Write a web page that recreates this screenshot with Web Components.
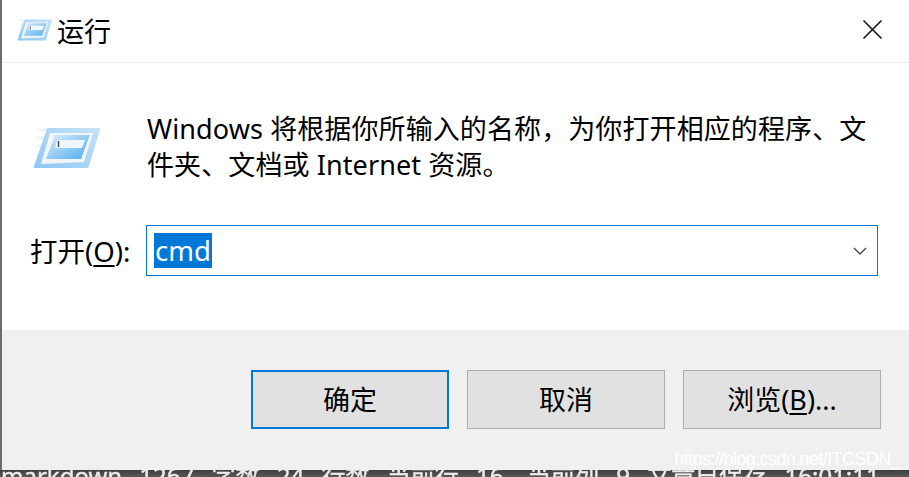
<!DOCTYPE html>
<html lang="zh">
<head>
<meta charset="utf-8">
<title>运行</title>
<style>
  html, body { margin: 0; height: 100%; overflow: hidden; }
  body { font-family: "Noto Sans", "Noto Sans CJK SC", sans-serif; color: #000; }
</style>
</head>
<body>
<template id="runIconTpl">
  <style>
    :host { display: block; line-height: 0; }
    svg { display: block; width: 100%; height: 100%; }
  </style>
  <svg viewBox="0 0 67 42" preserveAspectRatio="none">
    <defs>
      <linearGradient id="edge" x1="0" y1="1" x2="1" y2="0">
        <stop offset="0" stop-color="#8fc8f4"/>
        <stop offset="1" stop-color="#c6e2f8"/>
      </linearGradient>
      <linearGradient id="pane" x1="0" y1="0" x2="1" y2="1">
        <stop offset="0" stop-color="#dcedfb"/>
        <stop offset="1" stop-color="#4fadf0"/>
      </linearGradient>
      <linearGradient id="speed" x1="0" y1="0" x2="1" y2="0">
        <stop offset="0" stop-color="#fff"/>
        <stop offset="1" stop-color="#d5e9f9"/>
      </linearGradient>
    </defs>
    <path d="M3 3H16M1 11H12M0 19H9M0 27H6" stroke="url(#speed)" stroke-width="3" fill="none"/>
    <path d="M15 1H66Q67.500 1 67 3L55.500 40Q55 41 54 41H2Q0 41 1 39L14 2Q14.500 1 15 1Z" fill="url(#edge)"/>
    <path d="M17 6H60L51 35L8 37Z" fill="#f3f5f7"/>
    <path d="M22 8H57L48 32H13Z" fill="url(#pane)"/>
    <path d="M24 13H52L49 21H22Z" fill="#eef7fe"/>
    <path d="M25.500 14V20" stroke="#444" stroke-width="1.400"/>
  </svg>
</template>

<template id="titleBarTpl">
  <style>
    :host {
      display: flex; align-items: center; height: 63px; box-sizing: border-box;
      border-bottom: 1px solid #ececec; background: #fff;
    }
    .icon { width: 35px; height: 22px; margin: -2px 5px 0 15px; flex: none; }
    .text { font-size: 27px; line-height: 1; flex: 1; }
    svg { width: 21px; height: 21px; margin: -4px 26px 0 0; flex: none; }
  </style>
  <run-icon class="icon"></run-icon>
  <span class="text"><slot></slot></span>
  <svg viewBox="0 0 21 21"><path d="M1.500 1.500 19.500 19.500M19.500 1.500 1.500 19.500" stroke="#1c1c1c" stroke-width="1.700" fill="none"/></svg>
</template>

<template id="comboInputTpl">
  <style>
    :host {
      display: flex; align-items: center; box-sizing: border-box; height: 51px; flex: 1;
      border: 1px solid #0078d7; background: #fff; padding: 0 10px 0 7px;
    }
    .value { flex: 1; font-size: 27.500px; line-height: 35px; }
    .value span { display: inline-block; background: #0078d7; color: #fff; padding: 0 1px 0 1px; height: 35px; }
    svg { width: 14px; height: 8px; flex: none; }
  </style>
  <div class="value"><span><slot></slot></span></div>
  <svg viewBox="0 0 14 8"><path d="M1 1 7 7 13 1" stroke="#444" stroke-width="1.400" fill="none"/></svg>
</template>

<template id="dlgButtonTpl">
  <style>
    :host {
      display: flex; align-items: center; justify-content: center; box-sizing: border-box;
      width: 198px; height: 59px; background: #e1e1e1; border: 1px solid #adadad;
      font-size: 27px; line-height: 1; color: #000;
    }
    :host([primary]) { border: 2px solid #0078d7; }
  </style>
  <span><slot></slot></span>
</template>

<template id="runDialogTpl">
  <style>
    :host {
      display: flex; flex-direction: column; box-sizing: border-box; height: 470px;
      border-left: 2px solid #6c6c6c; background: #fff;
    }
    .body { flex: 1; display: flex; flex-direction: column; padding: 0 31px 0 28px; }
    .msg { display: flex; margin-top: 48px; height: 114px; }
    .msg run-icon { width: 67px; height: 42px; margin: 16px 47px 0 3px; flex: none; }
    .msg p { margin: 0; font-size: 27px; line-height: 36px; width: 730px; letter-spacing: .1px; }
    .row { display: flex; align-items: center; height: 51px; }
    .row label { font-size: 27.500px; line-height: 1; width: 116px; margin-top: 2px; flex: none; }
    .foot {
      height: 140px; box-sizing: border-box; background: #f0f0f0;
      display: flex; justify-content: flex-end; align-items: flex-start; gap: 18px;
      padding: 40px 28px 0 0;
    }
  </style>
  <slot name="title"></slot>
  <div class="body">
    <div class="msg">
      <run-icon></run-icon>
      <p><slot name="message"></slot></p>
    </div>
    <div class="row">
      <label><slot name="label"></slot></label>
      <slot name="input"></slot>
    </div>
  </div>
  <div class="foot"><slot name="buttons"></slot></div>
</template>

<template id="statusStripTpl">
  <style>
    :host {
      display: block; height: 7px; overflow: hidden; background: linear-gradient(#3f3f3f, #585858); color: #ececec;
      font-family: "Noto Sans", "Noto Sans CJK SC", sans-serif; font-size: 24px; white-space: nowrap;
    }
    div { line-height: 12px; padding-left: 1px; word-spacing: 11px; filter: blur(.5px); -webkit-text-stroke: .4px #ececec; }
  </style>
  <div><slot></slot></div>
</template>

<template id="waterMarkTpl">
  <style>
    :host {
      position: absolute; right: 9px; bottom: 9px; display: block;
      font: 18px/1 "Liberation Sans", sans-serif; letter-spacing: -.6px; color: #fff;
    }
  </style>
  <slot></slot>
</template>

<run-dialog>
  <title-bar slot="title">运行</title-bar>
  <span slot="message">Windows 将根据你所输入的名称&#xFF0C;为你打开相应的程序、文件夹、文档或 Internet 资源。</span>
  <span slot="label">打开(<u style="text-underline-offset:3px">O</u>):</span>
  <combo-input slot="input">cmd</combo-input>
  <dlg-button slot="buttons" primary>确定</dlg-button>
  <dlg-button slot="buttons">取消</dlg-button>
  <dlg-button slot="buttons">浏览(<u style="text-underline-offset:3px">B</u>)...</dlg-button>
</run-dialog>
<status-strip>markdown 1267 字数 24 行数 当前行 16, 当前列 9 文章已保存 16:01:11</status-strip>
<water-mark style="color:#fff"><span style="color:#fff">https://blog.csdn.net/ITCSDN_</span></water-mark>

<script>
  (function (customElements, document) {
    'use strict';

    // each element just stamps its template into an open shadow root
    function stamp(tag, tplId) {
      customElements.define(tag, class extends HTMLElement {
        constructor() {
          super();
          const shadowRoot = this.attachShadow({ mode: 'open' });
          shadowRoot.appendChild(document.importNode(document.getElementById(tplId).content, true));
        }
      });
    }

    stamp('run-icon', 'runIconTpl');
    stamp('title-bar', 'titleBarTpl');
    stamp('combo-input', 'comboInputTpl');
    stamp('dlg-button', 'dlgButtonTpl');
    stamp('run-dialog', 'runDialogTpl');
    stamp('status-strip', 'statusStripTpl');
    stamp('water-mark', 'waterMarkTpl');
  })(window.customElements, document);
</script>
</body>
</html>
